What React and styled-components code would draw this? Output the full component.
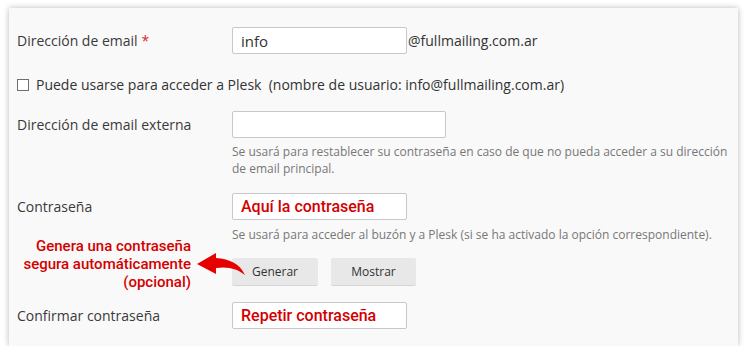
import React from 'react';
import styled, { createGlobalStyle } from 'styled-components';

const GlobalStyle = createGlobalStyle`
  body {
    margin: 0;
    background: #ffffff;
    font-family: 'Open Sans', 'Noto Sans', sans-serif;
    color: #333333;
  }
`;

const Panel = styled.div`
  margin: 8px 0 0 9px;
  width: 729px;
  height: 338px;
  box-sizing: border-box;
  padding: 19px 8px 0;
  background: #f9f9f9;
  box-shadow: 0 0 6px rgba(0, 0, 0, 0.28);
`;

const Row = styled.div`
  display: grid;
  grid-template-columns: 215px 1fr;
  align-items: center;
  margin-top: ${props => props.gap || 0}px;
  position: relative;
`;

const Label = styled.div`
  font-size: 14px;
  line-height: 20px;
  color: #3a3a3a;
`;

const Required = styled.span`
  color: #d9262c;
  margin-left: 4px;
`;

const Field = styled.div`
  display: flex;
  align-items: center;
`;

const Input = styled.div`
  width: ${props => props.width || 175}px;
  height: 27px;
  box-sizing: border-box;
  border: 1px solid #c8c8c8;
  border-radius: 2px;
  background: #fff;
  padding: 0 8px;
  display: flex;
  align-items: center;
  font-size: 15px;
  color: #333;
`;

const RedValue = styled.span`
  font-family: Roboto, 'Noto Sans', sans-serif;
  font-weight: 500;
  font-size: 16px;
  color: #d40000;
`;

const Suffix = styled.span`
  font-size: 14px;
  margin-left: 1px;
`;

const CheckRow = styled.label`
  display: flex;
  align-items: center;
  margin-top: 22px;
  font-size: 14px;
  line-height: 18px;
  white-space: pre;
`;

const Box = styled.span`
  width: 12px;
  height: 12px;
  box-sizing: border-box;
  border: 1px solid #6f6f6f;
  background: #fff;
  margin-right: 7px;
`;

const Hint = styled.div`
  grid-column: 2;
  margin-top: ${props => props.gap || 5}px;
  font-size: 12px;
  line-height: 17px;
  color: #777;
`;

const Buttons = styled.div`
  display: flex;
  gap: 13px;
`;

const Button = styled.button`
  width: ${props => props.width}px;
  height: 28px;
  border: none;
  border-bottom: 1px solid #d6d6d6;
  border-radius: 2px;
  background: #e8e8e8;
  font-family: 'Open Sans', sans-serif;
  font-size: 12px;
  color: #333;
  padding: 0;
`;

const Callout = styled.div`
  position: absolute;
  left: 0;
  top: -21px;
  width: 174px;
  text-align: right;
  font-family: Roboto, 'Noto Sans', sans-serif;
  font-weight: 500;
  font-size: 15px;
  line-height: 18px;
  color: #d40000;
`;

const Arrow = styled.svg`
  position: absolute;
  left: 178px;
  top: -8px;
`;

const App = () => (
  <>
    <GlobalStyle />
    <Panel>
      <Row>
        <Label>
          Dirección de email<Required>*</Required>
        </Label>
        <Field>
          <Input>info</Input>
          <Suffix>@fullmailing.com.ar</Suffix>
        </Field>
      </Row>

      <CheckRow>
        <Box />
        {'Puede usarse para acceder a Plesk  (nombre de usuario: info@fullmailing.com.ar)'}
      </CheckRow>

      <Row gap={17}>
        <Label>Dirección de email externa</Label>
        <Input width={214} />
        <Hint>
          Se usará para restablecer su contraseña en caso de que no pueda acceder a su dirección
          <br />
          de email principal.
        </Hint>
      </Row>

      <Row gap={16}>
        <Label>Contraseña</Label>
        <Input>
          <RedValue>Aquí la contraseña</RedValue>
        </Input>
        <Hint gap={6}>
          Se usará para acceder al buzón y a Plesk (si se ha activado la opción correspondiente).
        </Hint>
      </Row>

      <Row gap={15}>
        <Callout>
          Genera una contraseña
          <br />
          segura automáticamente
          <br />
          (opcional)
        </Callout>
        <Arrow width="52" height="28" viewBox="0 0 52 28">
          <path
            d="M2,14 L21,3 L21,8 C35,9 45,14 50,25 C43,19 33,16 21,18 L21,24 Z"
            fill="#e60000"
          />
        </Arrow>
        <div />
        <Buttons>
          <Button width={86}>Generar</Button>
          <Button width={85}>Mostrar</Button>
        </Buttons>
      </Row>

      <Row gap={16}>
        <Label>Confirmar contraseña</Label>
        <Input>
          <RedValue>Repetir contraseña</RedValue>
        </Input>
      </Row>
    </Panel>
  </>
);

export default App;
